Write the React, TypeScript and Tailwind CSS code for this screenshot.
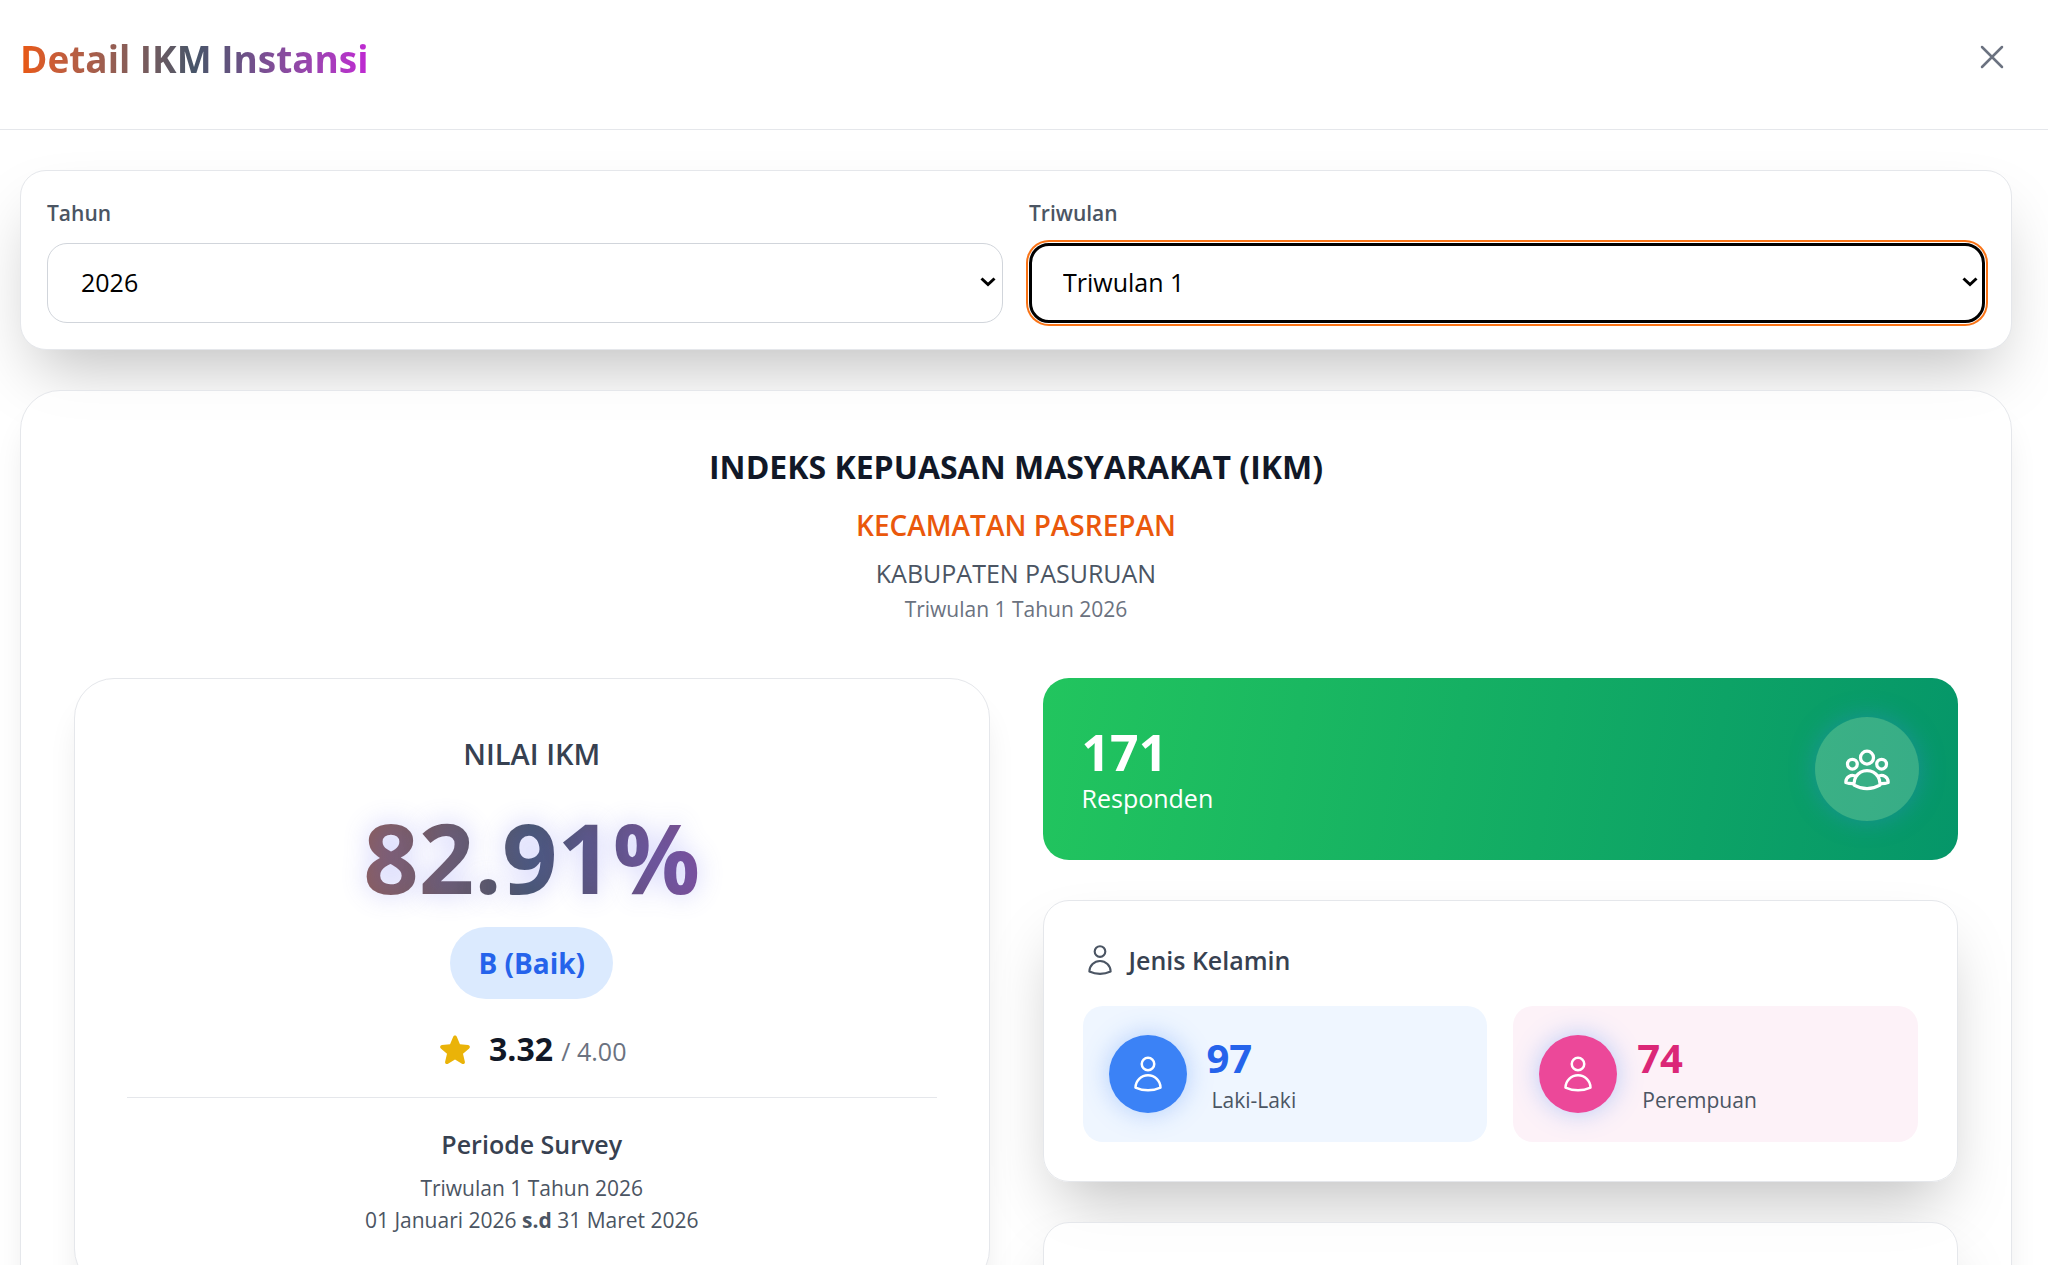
import { useId, useState } from 'react';
import type { ReactNode } from 'react';
import { HiOutlineUser, HiOutlineUserGroup, HiOutlineXMark, HiStar } from 'react-icons/hi2';
import { clsx } from 'clsx';

const YEARS = ['2026', '2025', '2024'];
const QUARTERS = ['Triwulan 1', 'Triwulan 2', 'Triwulan 3', 'Triwulan 4'];

interface FilterSelectProps {
  label: string;
  value: string;
  options: string[];
  active?: boolean;
  onChange: (value: string) => void;
}

function FilterSelect({ label, value, options, active, onChange }: FilterSelectProps) {
  const id = useId();
  return (
    <div className="flex flex-col gap-[14px]">
      <label htmlFor={id} className="text-[21px] leading-8 font-semibold text-[#4b5563]">{label}</label>
      <div className="relative">
        <select
          id={id}
          value={value}
          onChange={e => onChange(e.target.value)}
          className={clsx(
            'w-full h-20 appearance-none rounded-[20px] bg-white text-[25px] text-black outline-none',
            active
              ? 'border-3 border-black px-[31px] shadow-[0_0_0_1px_#fff,0_0_0_3px_#f97316]'
              : 'border border-[#d1d5db] px-[33px]',
          )}
        >
          {options.map(o => <option key={o}>{o}</option>)}
        </select>
        <svg
          viewBox="0 0 16 10"
          className="pointer-events-none absolute top-[34px] right-[7px] h-[10px] w-4 fill-none stroke-black stroke-3"
        >
          <path d="M1.5 1.5 8 7.5l6.5-6" />
        </svg>
      </div>
    </div>
  );
}

interface GenderTileProps {
  count: number;
  label: string;
  tile: string;
  circle: string;
  number: string;
}

function GenderTile({ count, label, tile, circle, number }: GenderTileProps) {
  return (
    <div className={clsx('flex items-center gap-5 rounded-[20px] p-[26px]', tile)}>
      <div className={clsx('flex size-[78px] shrink-0 items-center justify-center rounded-full text-white', circle)}>
        <HiOutlineUser className="size-10" />
      </div>
      <div>
        <div className={clsx('text-[40px] leading-[52px] font-bold', number)}>{count}</div>
        <div className="pl-[5px] text-[21px] leading-8 text-[#4b5563]">{label}</div>
      </div>
    </div>
  );
}

function Panel({ children }: { children?: ReactNode }) {
  return (
    <div className="rounded-[26px] border border-[#e5e7eb] bg-white/80 p-[39px] shadow-[0_33px_65px_-16px_rgba(0,0,0,0.25)]">
      {children}
    </div>
  );
}

export default function App() {
  const [year, setYear] = useState('2026');
  const [quarter, setQuarter] = useState('Triwulan 1');
  const period = `${quarter} Tahun ${year}`;

  return (
    <div className="h-screen overflow-hidden bg-white font-['Open_Sans','Noto_Sans',sans-serif]">
      <header className="flex items-start justify-between border-b border-[#e5e7eb] pt-[33px] pr-9 pb-[44px] pl-5">
        <h1 className="bg-linear-to-r from-[#ea580c] via-[#475569] to-[#c026d3] bg-clip-text text-[37px] leading-[52px] font-bold text-transparent">
          Detail IKM Instansi
        </h1>
        <button type="button" aria-label="Tutup" className="mt-1 text-[#6b7280]">
          <HiOutlineXMark className="size-10" />
        </button>
      </header>

      <main className="flex flex-col gap-10 pt-10 pr-9 pl-5">
        {/* Filter */}
        <section className="grid grid-cols-2 gap-[26px] rounded-[26px] border border-[#e5e7eb] bg-white p-[26px] shadow-[0_33px_65px_-16px_rgba(0,0,0,0.25)]">
          <FilterSelect label="Tahun" value={year} options={YEARS} onChange={setYear} />
          <FilterSelect label="Triwulan" value={quarter} options={QUARTERS} onChange={setQuarter} active />
        </section>

        <section className="rounded-[40px] border border-[#e5e7eb] bg-white/80 px-[53px] py-[52px] shadow-[0_26px_33px_-7px_rgba(0,0,0,0.1)]">
          {/* Judul */}
          <div className="text-center">
            <h2 className="text-[32px] leading-[48px] font-bold text-[#111827]">INDEKS KEPUASAN MASYARAKAT (IKM)</h2>
            <p className="mt-3 text-[28px] leading-[44px] font-semibold text-[#ea580c]">KECAMATAN PASREPAN</p>
            <p className="mt-[6px] text-[25px] leading-10 text-[#4b5563]">KABUPATEN PASURUAN</p>
            <p className="text-[21px] leading-8 text-[#6b7280]">{period}</p>
          </div>

          <div className="mt-[53px] grid grid-cols-2 items-start gap-[53px]">
            {/* Nilai IKM */}
            <div className="rounded-[40px] border border-[#e5e7eb] bg-white p-[52px] text-center shadow-[0_26px_33px_-7px_rgba(0,0,0,0.1)]">
              <h3 className="text-[29px] leading-[46px] font-semibold text-[#374151]">NILAI IKM</h3>
              <div className="mt-5 bg-linear-to-r from-[#ea580c] via-[#475569] to-[#c026d3] bg-clip-text text-[97px] leading-[118px] font-bold text-transparent [text-shadow:0_0_26px_rgba(99,102,241,0.3)]">
                82.91%
              </div>
              <span className="mt-3 inline-block rounded-full bg-[#dbeafe] px-7 py-3 text-[28px] leading-[48px] font-bold text-[#2563eb]">
                B (Baik)
              </span>
              <div className="mt-6 flex items-center justify-center gap-4">
                <HiStar className="size-9 text-[#eab308]" />
                <p className="text-[32px] leading-[52px] font-bold text-[#111827]">
                  3.32 <span className="text-[25px] font-normal text-[#6b7280]">/ 4.00</span>
                </p>
              </div>
              <div className="mt-5 border-t border-[#e5e7eb] pt-[26px]">
                <h4 className="text-[25px] leading-10 font-semibold text-[#374151]">Periode Survey</h4>
                <p className="mt-2 text-[21px] leading-8 text-[#4b5563]">{period}</p>
                <p className="text-[21px] leading-8 text-[#4b5563]">
                  01 Januari 2026 <strong className="font-bold">s.d</strong> 31 Maret 2026
                </p>
              </div>
            </div>

            <div className="flex flex-col gap-10">
              {/* Responden */}
              <div className="flex items-center justify-between rounded-[26px] bg-[linear-gradient(100deg,#22c55e,#059669)] p-[39px] text-white">
                <div>
                  <div className="text-[50px] leading-[58px] font-bold">171</div>
                  <div className="text-[25px] leading-[34px]">Responden</div>
                </div>
                <div className="flex size-[104px] items-center justify-center rounded-full bg-white/20 shadow-[0_0_26px_rgba(59,130,246,0.35)]">
                  <HiOutlineUserGroup className="size-[52px]" />
                </div>
              </div>

              <Panel>
                <h3 className="flex items-center gap-3 text-[25px] leading-10 font-semibold text-[#374151]">
                  <HiOutlineUser className="size-[34px] text-[#4b5563]" />
                  Jenis Kelamin
                </h3>
                <div className="mt-[26px] grid grid-cols-2 gap-[26px]">
                  <GenderTile
                    count={97}
                    label="Laki-Laki"
                    tile="bg-[#eff6ff]"
                    circle="bg-[#3b82f6] shadow-[0_0_26px_rgba(59,130,246,0.35)]"
                    number="text-[#2563eb]"
                  />
                  <GenderTile
                    count={74}
                    label="Perempuan"
                    tile="bg-[#fdf2f8]"
                    circle="bg-[#ec4899] shadow-[0_0_26px_rgba(59,130,246,0.35)]"
                    number="text-[#db2777]"
                  />
                </div>
              </Panel>

              <Panel>
                <div className="h-32" />
              </Panel>
            </div>
          </div>
        </section>
      </main>
    </div>
  );
}
